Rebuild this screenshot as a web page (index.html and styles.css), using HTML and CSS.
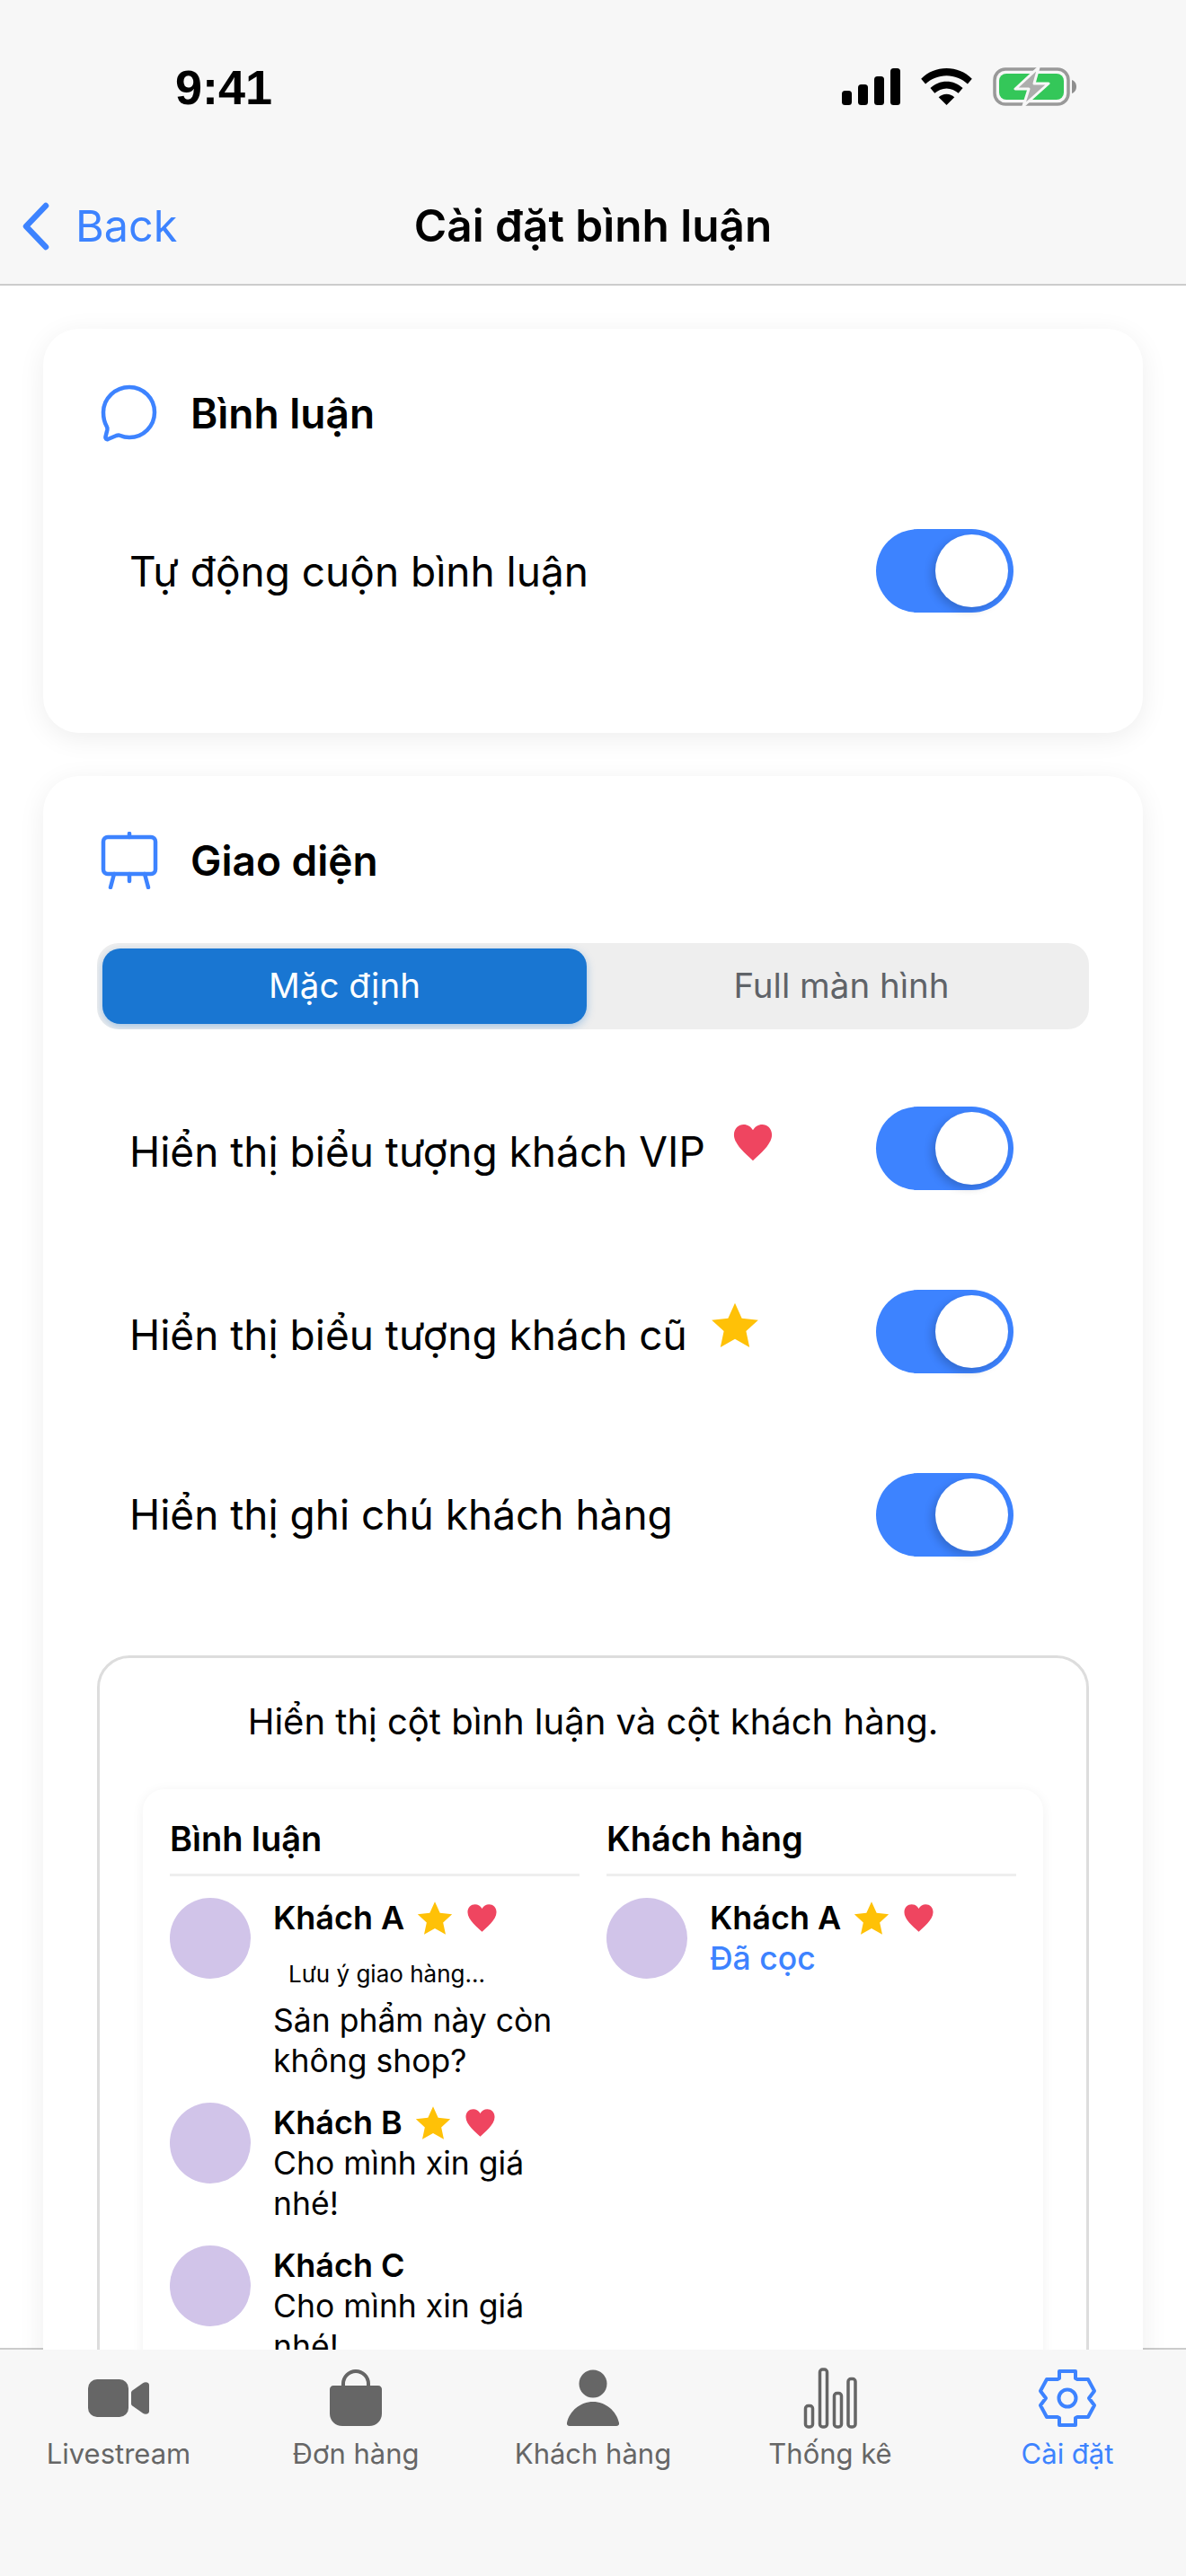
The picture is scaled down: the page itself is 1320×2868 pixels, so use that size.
FILE: index.html
```html
<!DOCTYPE html>
<html lang="vi">
<head>
    <meta charset="UTF-8">
    <meta name="viewport" content="width=device-width, initial-scale=1.0">
    <title>Cài đặt bình luận</title>
    <link rel="stylesheet" href="styles.css">
</head>
<body>
    <div class="app">
        <header class="top">
            <div class="status-bar">
                <span class="time">9:41</span>
                <div class="status-icons">
                    <svg class="ic-signal" viewBox="0 0 65 41"><rect x="0" y="25" width="11" height="16" rx="3.500"/><rect x="18" y="18" width="11" height="23" rx="3.500"/><rect x="36" y="9" width="11" height="32" rx="3.500"/><rect x="54" y="0" width="11" height="41" rx="3.500"/></svg>
                    <svg class="ic-wifi" viewBox="0 0 58 42"><path d="M29 0C18 0 8 4 0 12l5 6c6.500-6 15-9.500 24-9.500S46.500 12 53 18l5-6C50 4 40 0 29 0z"/><path d="M29 15c-7 0-13.500 2.700-18.500 7.500l5 6c3.500-3.300 8.500-5.500 13.500-5.500s10 2.200 13.500 5.500l5-6C42.500 17.700 36 15 29 15z"/><path d="M29 29.500c-3.500 0-6.500 1.300-9 3.500l9 9 9-9c-2.500-2.200-5.500-3.500-9-3.500z"/></svg>
                    <svg class="ic-battery" viewBox="0 0 93 45"><rect x="2" y="3" width="82" height="39" rx="12" fill="none" stroke="#999" stroke-width="3.500"/><rect x="7" y="8" width="72" height="29" rx="8" fill="#34c759"/><path d="M88 15c3 1 5 4 5 7.500s-2 6.500-5 7.500z" fill="#8e8e8e"/><path d="M51 1L25 25h15l-6 19 28-25H46z" fill="#adadad" stroke="#f7f7f7" stroke-width="3" stroke-linejoin="round"/></svg>
                </div>
            </div>
            <div class="nav-bar">
                <a class="back">
                    <svg class="ic-back" viewBox="0 0 32 54"><path d="M27 4L5 27l22 23" fill="none" stroke="#3d83ff" stroke-width="6.500" stroke-linecap="round" stroke-linejoin="round"/></svg>
                    <span>Back</span>
                </a>
                <h1 class="nav-title">Cài đặt bình luận</h1>
            </div>
        </header>

        <main class="content">
            <section class="card card-short">
                <div class="card-head">
                    <svg class="ic-head" viewBox="0 0 64 64"><path d="M32 3C47.500 3 60 15.500 60 31S47.500 59 32 59c-3.500 0-7-.6-10-2-1.500-.6-3-.5-4.500 0L8 61c-1.500.5-3-.8-2.600-2.300l2-8.200c.3-1.500 0-2.800-.8-4C4 41.800 3 36.500 3 31 3 15.500 16.500 3 32 3z" fill="none" stroke="#3d83ff" stroke-width="4.500" stroke-linejoin="round"/></svg>
                    <h2>Bình luận</h2>
                </div>
                <div class="row">
                    <span class="row-label">Tự động cuộn bình luận</span>
                    <span class="toggle"><span class="knob"></span></span>
                </div>
            </section>

            <section class="card">
                <div class="card-head">
                    <svg class="ic-head" viewBox="0 0 64 64"><rect x="3" y="6" width="58" height="41" rx="5" fill="none" stroke="#3d83ff" stroke-width="4.500"/><path d="M32 2v4M15 47l-4 15M49 47l4 15M32 47v8" fill="none" stroke="#3d83ff" stroke-width="4.500" stroke-linecap="round"/></svg>
                    <h2>Giao diện</h2>
                </div>

                <div class="segment">
                    <div class="seg-item active">Mặc định</div>
                    <div class="seg-item">Full màn hình</div>
                </div>

                <div class="row row-first">
                    <span class="row-label label-low">Hiển thị biểu tượng khách VIP
                        <svg class="ic-heart-lg" viewBox="0 0 24 24"><path class="heart" d="M12 22.500C9 19.500 1 13.500 1 7.500 1 3.800 3.700 1.500 6.600 1.500c2.300 0 4.300 1.200 5.400 3.300 1.100-2.100 3.100-3.300 5.400-3.300C20.300 1.500 23 3.800 23 7.500c0 6-8 12-11 15z"/></svg>
                    </span>
                    <span class="toggle"><span class="knob"></span></span>
                </div>
                <div class="row">
                    <span class="row-label label-low">Hiển thị biểu tượng khách cũ
                        <svg class="ic-star-lg" viewBox="0 0 24 24"><path class="star" d="M12 .8l3.400 7.500 8.100.9-6 5.500 1.700 8-7.200-4.100-7.200 4.100 1.700-8-6-5.500 8.100-.9z"/></svg>
                    </span>
                    <span class="toggle"><span class="knob"></span></span>
                </div>
                <div class="row">
                    <span class="row-label">Hiển thị ghi chú khách hàng</span>
                    <span class="toggle"><span class="knob"></span></span>
                </div>

                <div class="preview">
                    <p class="preview-caption">Hiển thị cột bình luận và cột khách hàng.</p>
                    <div class="preview-card">
                        <div class="col col-comments">
                            <div class="col-title">Bình luận</div>
                            <div class="comment">
                                <div class="avatar"></div>
                                <div class="comment-body">
                                    <div class="name">Khách A
                                        <svg class="ic-star" viewBox="0 0 24 24"><path class="star" d="M12 .8l3.400 7.500 8.100.9-6 5.500 1.700 8-7.200-4.100-7.200 4.100 1.700-8-6-5.500 8.100-.9z"/></svg>
                                        <svg class="ic-heart" viewBox="0 0 24 24"><path class="heart" d="M12 22.500C9 19.500 1 13.500 1 7.500 1 3.800 3.700 1.500 6.600 1.500c2.300 0 4.300 1.200 5.400 3.300 1.100-2.100 3.100-3.300 5.400-3.300C20.300 1.500 23 3.800 23 7.500c0 6-8 12-11 15z"/></svg>
                                    </div>
                                    <div class="note">Lưu ý giao hàng...</div>
                                    <div class="msg">Sản phẩm này còn không shop?</div>
                                </div>
                            </div>
                            <div class="comment">
                                <div class="avatar"></div>
                                <div class="comment-body">
                                    <div class="name">Khách B
                                        <svg class="ic-star" viewBox="0 0 24 24"><path class="star" d="M12 .8l3.400 7.500 8.100.9-6 5.500 1.700 8-7.200-4.100-7.200 4.100 1.700-8-6-5.500 8.100-.9z"/></svg>
                                        <svg class="ic-heart" viewBox="0 0 24 24"><path class="heart" d="M12 22.500C9 19.500 1 13.500 1 7.500 1 3.800 3.700 1.500 6.600 1.500c2.300 0 4.300 1.200 5.400 3.300 1.100-2.100 3.100-3.300 5.400-3.300C20.300 1.500 23 3.800 23 7.500c0 6-8 12-11 15z"/></svg>
                                    </div>
                                    <div class="msg">Cho mình xin giá nhé!</div>
                                </div>
                            </div>
                            <div class="comment">
                                <div class="avatar"></div>
                                <div class="comment-body">
                                    <div class="name">Khách C</div>
                                    <div class="msg">Cho mình xin giá nhé!</div>
                                </div>
                            </div>
                        </div>
                        <div class="col col-customers">
                            <div class="col-title">Khách hàng</div>
                            <div class="comment">
                                <div class="avatar"></div>
                                <div class="comment-body">
                                    <div class="name">Khách A
                                        <svg class="ic-star" viewBox="0 0 24 24"><path class="star" d="M12 .8l3.400 7.500 8.100.9-6 5.500 1.700 8-7.200-4.100-7.200 4.100 1.700-8-6-5.500 8.100-.9z"/></svg>
                                        <svg class="ic-heart" viewBox="0 0 24 24"><path class="heart" d="M12 22.500C9 19.500 1 13.500 1 7.500 1 3.800 3.700 1.500 6.600 1.500c2.300 0 4.300 1.200 5.400 3.300 1.100-2.100 3.100-3.300 5.400-3.300C20.300 1.500 23 3.800 23 7.500c0 6-8 12-11 15z"/></svg>
                                    </div>
                                    <div class="deposit">Đã cọc</div>
                                </div>
                            </div>
                        </div>
                    </div>
                </div>
            </section>
        </main>

        <nav class="tabs">
            <div class="tab">
                <svg class="ic-tab" viewBox="0 0 66 66"><rect x="-1" y="12" width="45" height="42" rx="10" fill="#666"/><path d="M47 27c0-1 .5-2 1.300-2.600l11.700-8.200c2.500-1.700 7 -1.200 7 2v29.600c0 3.200-4.500 3.700-7 2l-11.700-8.200c-.8-.6-1.300-1.600-1.300-2.600z" fill="#666"/></svg>
                <span>Livestream</span>
            </div>
            <div class="tab">
                <svg class="ic-tab" viewBox="0 0 66 66"><path d="M19 20v-3a14 14 0 0 1 28 0v3" fill="none" stroke="#666" stroke-width="4"/><path d="M8 19h50c2.200 0 4 1.800 4 4v27c0 8-6 14-14 14H18C10 64 4 58 4 50V23c0-2.200 1.800-4 4-4z" fill="#666"/></svg>
                <span>Đơn hàng</span>
            </div>
            <div class="tab">
                <svg class="ic-tab" viewBox="0 0 66 66"><circle cx="33" cy="17" r="15.500" fill="#666"/><path d="M7 64c-2 0-3.500-1.500-3-3.500C7 47 19 37 33 37s26 10 29 23.500c.5 2-1 3.500-3 3.500z" fill="#666"/></svg>
                <span>Khách hàng</span>
            </div>
            <div class="tab">
                <svg class="ic-tab" viewBox="0 0 66 66"><g fill="none" stroke="#666" stroke-width="3.500"><rect x="5.500" y="41.500" width="8" height="23.500" rx="3"/><rect x="21.500" y="1" width="8" height="64" rx="3"/><rect x="37.500" y="27.500" width="8" height="37.500" rx="3"/><rect x="53" y="11.500" width="8" height="53.500" rx="3"/></g></svg>
                <span>Thống kê</span>
            </div>
            <div class="tab tab-active">
                <svg class="ic-tab" viewBox="0 0 66 66"><g fill="none" stroke="#3d83ff" stroke-width="4" stroke-linejoin="round"><path d="M24 3H42V11L44 12H56L63 25L57 33L63 41L56 54H44L42 55V63H24V55L22 54H10L3 41L9 33L3 25L10 12H22L24 11Z"/><circle cx="33" cy="33" r="9.500"/></g></svg>
                <span>Cài đặt</span>
            </div>
        </nav>
    </div>
</body>
</html>
```

FILE: styles.css
```css
* {
    box-sizing: border-box;
}
html, body {
    margin: 0;
    padding: 0;
}
body {
    font-family: Inter, "Noto Sans", sans-serif;
    background: #fff;
    color: #000;
}
.app {
    width: 1320px;
    height: 2868px;
    display: flex;
    flex-direction: column;
    overflow: hidden;
}

/* top bars */
.top {
    background: #f7f7f7;
    border-bottom: 2px solid #ccc;
    height: 318px;
    flex: none;
}
.status-bar {
    height: 186px;
    display: flex;
    justify-content: space-between;
    align-items: flex-start;
    padding: 66px 122px 0 195px;
}
.time {
    font-family: "Liberation Sans", sans-serif;
    font-size: 54px;
    font-weight: 700;
    line-height: 62px;
}
.status-icons {
    display: flex;
    align-items: center;
    gap: 23px;
    padding-top: 8px;
}
.ic-signal {
    width: 65px;
    height: 41px;
}
.ic-wifi {
    width: 57px;
    height: 41px;
}
.ic-battery {
    width: 93px;
    height: 45px;
}
.nav-bar {
    height: 130px;
    position: relative;
    display: flex;
    align-items: center;
    justify-content: center;
}
.back {
    position: absolute;
    left: 24px;
    top: 36px;
    display: flex;
    align-items: center;
    gap: 28px;
    color: #3d83ff;
    font-size: 48.500px;
}
.ic-back {
    width: 32px;
    height: 54px;
}
.nav-title {
    margin: 0;
    font-size: 49.500px;
    font-weight: 600;
}

/* scrolling part */
.content {
    flex: 1;
    min-height: 0;
    overflow: hidden;
    padding: 48px 48px 0;
    display: flex;
    flex-direction: column;
    gap: 48px;
    background: linear-gradient(#ccc, #ccc) bottom / 100% 2px no-repeat;
}
.card {
    flex: none;
    background: #fff;
    border-radius: 40px;
    padding: 60px;
    box-shadow: 0 6px 30px rgba(0,0,0,0.07);
}
.card-short {
    height: 450px;
}
.card-head {
    display: flex;
    align-items: center;
    gap: 36px;
    height: 64px;
    margin-top: 2px;
    padding-left: 4px;
}
.ic-head {
    width: 64px;
    height: 64px;
    flex: none;
}
.card-head h2 {
    margin: 0;
    font-size: 46px;
    font-weight: 600;
}
.row {
    height: 204px;
    display: flex;
    align-items: center;
    justify-content: space-between;
    padding: 0 84px 0 36px;
}
.card-short .row {
    height: 93px;
    margin-top: 97px;
}
.row-first {
    margin-top: 30px;
}
.row-label {
    font-size: 46px;
    display: flex;
    align-items: flex-start;
}
.label-low {
    margin-top: 8px;
}
.toggle {
    flex: none;
    width: 153px;
    height: 93px;
    border-radius: 47px;
    background: #3d83ff;
    padding: 6px;
    display: flex;
    justify-content: flex-end;
}
.knob {
    width: 81px;
    height: 81px;
    border-radius: 50%;
    background: #fff;
    box-shadow: -4px 4px 10px rgba(0,0,0,0.18);
}
.heart {
    fill: #ef4560;
}
.star {
    fill: #ffc107;
}
.ic-heart-lg {
    width: 46px;
    height: 46px;
    margin: -5px 0 0 30px;
}
.ic-star-lg {
    width: 54px;
    height: 54px;
    margin: -9px 0 0 26px;
}

/* segmented control */
.segment {
    margin-top: 60px;
    height: 96px;
    background: #eee;
    border-radius: 24px;
    padding: 6px;
    display: flex;
    gap: 14px;
    overflow: hidden;
}
.seg-item {
    flex: 1;
    display: flex;
    align-items: center;
    justify-content: center;
    font-size: 38.500px;
    color: #5f6368;
    border-radius: 20px;
    padding-bottom: 2px;
}
.seg-item.active {
    background: #1976d2;
    color: #fff;
    box-shadow: 0 3px 10px rgba(25,118,210,0.35);
}

/* preview box */
.preview {
    margin-top: 55px;
    border: 3px solid #ddd;
    border-radius: 36px;
    padding: 46px 48px 48px;
}
.preview-caption {
    margin: 0 0 50px;
    text-align: center;
    font-size: 40px;
    line-height: 50px;
}
.preview-card {
    background: #fff;
    border-radius: 24px;
    padding: 30px;
    display: flex;
    gap: 30px;
    box-shadow: 0 2px 14px rgba(0,0,0,0.06);
}
.col-comments {
    width: 456px;
    flex: none;
}
.col-customers {
    flex: 1;
}
.col-title {
    font-size: 38px;
    font-weight: 600;
    line-height: 50px;
    padding-bottom: 14px;
    border-bottom: 3px solid #eee;
    margin-bottom: 24px;
}
.comment {
    display: flex;
    gap: 25px;
    margin-bottom: 24px;
}
.avatar {
    flex: none;
    width: 90px;
    height: 90px;
    border-radius: 50%;
    background: #d1c4e9;
}
.comment-body {
    flex: 1;
    min-width: 0;
    font-size: 35.500px;
    line-height: 45px;
}
.name {
    font-size: 36px;
    font-weight: 600;
    display: flex;
    align-items: center;
}
.ic-star {
    width: 40px;
    height: 40px;
    margin-left: 14px;
}
.ic-heart {
    width: 35px;
    height: 35px;
    margin-left: 15px;
}
.note {
    font-size: 26px;
    line-height: 34px;
    padding: 23px 0 12px 17px;
}
.deposit {
    color: #3d83ff;
    font-weight: 500;
}

/* bottom tabs */
.tabs {
    flex: none;
    height: 252px;
    background: #f7f7f7;
    display: flex;
    padding-top: 21px;
    position: relative;
}
.tab {
    flex: 1;
    display: flex;
    flex-direction: column;
    align-items: center;
    font-size: 31px;
    color: #666;
}
.ic-tab {
    width: 66px;
    height: 66px;
    margin-bottom: 10px;
    overflow: visible;
}
.tab-active {
    color: #3d83ff;
}
```
